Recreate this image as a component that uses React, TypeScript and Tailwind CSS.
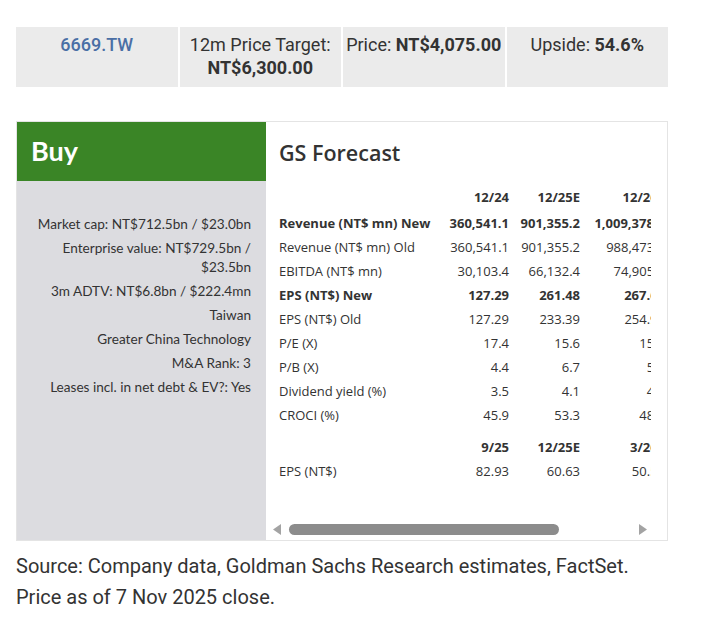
const rows: { label: string; bold?: boolean; v: string[] }[] = [
  { label: 'Revenue (NT$ mn) New', bold: true, v: ['360,541.1', '901,355.2', '1,009,378.6', '1,102,417.3'] },
  { label: 'Revenue (NT$ mn) Old', v: ['360,541.1', '901,355.2', '988,473.9', '1,061,204.5'] },
  { label: 'EBITDA (NT$ mn)', v: ['30,103.4', '66,132.4', '74,905.1', '81,337.8'] },
  { label: 'EPS (NT$) New', bold: true, v: ['127.29', '261.48', '267.65', '290.12'] },
  { label: 'EPS (NT$) Old', v: ['127.29', '233.39', '254.92', '276.40'] },
  { label: 'P/E (X)', v: ['17.4', '15.6', '15.2', '14.0'] },
  { label: 'P/B (X)', v: ['4.4', '6.7', '5.3', '4.6'] },
  { label: 'Dividend yield (%)', v: ['3.5', '4.1', '4.3', '4.8'] },
  { label: 'CROCI (%)', v: ['45.9', '53.3', '48.1', '47.6'] },
];

const facts = [
  'Market cap: NT$712.5bn / $23.0bn',
  'Enterprise value: NT$729.5bn / $23.5bn',
  '3m ADTV: NT$6.8bn / $222.4mn',
  'Taiwan',
  'Greater China Technology',
  'M&A Rank: 3',
  'Leases incl. in net debt & EV?: Yes',
];

const colW = ['w-[71px]', 'w-[71px]', 'w-[85px]', 'w-[85px]'];

export default function App() {
  return (
    <div className="w-[707px] h-[622px] bg-white pl-4 pt-[27px] text-[#333]">
      <div className="w-[652px]">
        {/* summary strip */}
        <div className="grid grid-cols-4 gap-[2px] h-[60px] font-['Roboto',sans-serif] text-[18px] leading-[23px] text-center">
          <div className="bg-[#ebebeb] pt-[6px] font-medium text-[#4a6fa5]">6669.TW</div>
          <div className="bg-[#ebebeb] pt-[6px]">
            12m Price Target:
            <div className="font-bold">NT$6,300.00</div>
          </div>
          <div className="bg-[#ebebeb] pt-[6px]">
            Price: <span className="font-bold">NT$4,075.00</span>
          </div>
          <div className="bg-[#ebebeb] pt-[6px]">
            Upside: <span className="font-bold">54.6%</span>
          </div>
        </div>

        {/* rating + forecast */}
        <div className="mt-[34px] flex h-[420px] border border-[#e4e4e4]">
          <div className="w-[249px] shrink-0 bg-[#dcdce0] flex flex-col">
            <div className="h-[59px] bg-[#3a8526] px-[14px] flex items-center font-['Lato',sans-serif] font-bold text-[27px] text-white">
              Buy
            </div>
            <div className="pt-[34px] pr-[15px] pl-4 text-right font-['Lato',sans-serif] text-[13.6px] leading-[19px] flex flex-col gap-[5px]">
              {facts.map((f) => (
                <div key={f}>{f}</div>
              ))}
            </div>
          </div>

          <div className="flex-1 min-w-0 flex flex-col pr-4 font-['Open_Sans',sans-serif]">
            <div className="pl-[13px] pt-[17px] text-[21.5px] leading-[28px] font-semibold text-[#333]">GS Forecast</div>
            <div className="ml-[3px] mt-[19px] flex-1 flex flex-col overflow-hidden">
              <div className="flex-1 overflow-hidden">
                <table className="ml-[10px] table-fixed w-[471px] border-collapse text-[13px] whitespace-nowrap">
                  <thead>
                    <tr className="h-[26px] font-bold">
                      <th className="w-[159px] p-0"></th>
                      {['12/24', '12/25E', '12/26E', '12/27E'].map((h, i) => (
                        <th key={h} className={`${colW[i]} p-0 pb-[2px] text-right font-bold`}>{h}</th>
                      ))}
                    </tr>
                  </thead>
                  <tbody>
                    {rows.map((r) => (
                      <tr key={r.label} className={`h-6 ${r.bold ? 'font-bold' : ''}`}>
                        <td className="p-0 text-left">{r.label}</td>
                        {r.v.map((x, i) => (
                          <td key={i} className="p-0 text-right">{x}</td>
                        ))}
                      </tr>
                    ))}
                    <tr className="font-bold">
                      <td className="pt-[8px] h-[32px]"></td>
                      {['9/25', '12/25E', '3/26E', '6/26E'].map((h) => (
                        <td key={h} className="pt-[8px] h-[32px] text-right">{h}</td>
                      ))}
                    </tr>
                    <tr className="h-6">
                      <td className="p-0">EPS (NT$)</td>
                      {['82.93', '60.63', '50.51', '58.04'].map((x) => (
                        <td key={x} className="p-0 text-right">{x}</td>
                      ))}
                    </tr>
                  </tbody>
                </table>
              </div>
              {/* scrollbar */}
              <div className="h-[15px] mb-[3px] flex items-center px-[4px] gap-[8px]">
                <svg width="8" height="11" viewBox="0 0 8 11"><path d="M8 0 L0 5.5 L8 11 Z" fill="#a3a3a3" /></svg>
                <div className="w-[270px] h-[11px] rounded-full bg-[#8c8c8c]"></div>
                <div className="flex-1"></div>
                <svg width="8" height="11" viewBox="0 0 8 11"><path d="M0 0 L8 5.5 L0 11 Z" fill="#a3a3a3" /></svg>
              </div>
            </div>
          </div>
        </div>

        <div className="mt-[10px] font-['Roboto',sans-serif] text-[20px] leading-[31px] text-[#333]">
          <div>Source: Company data, Goldman Sachs Research estimates, FactSet.</div>
          <div>Price as of 7 Nov 2025 close.</div>
        </div>
      </div>
    </div>
  );
}
